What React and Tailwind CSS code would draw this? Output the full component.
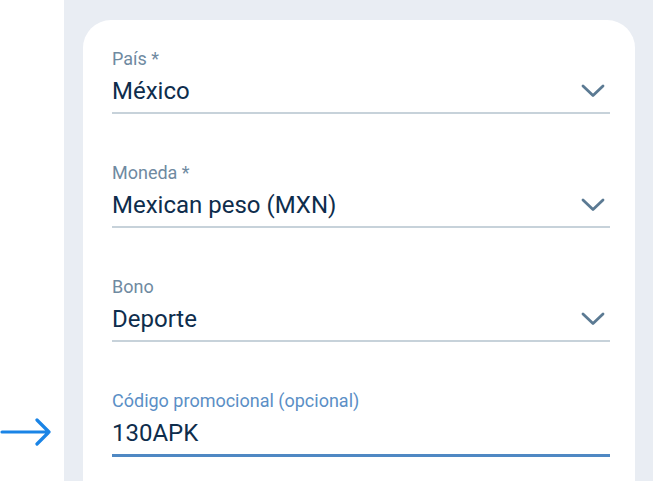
const fields = [
  { label: "País *", value: "México", select: true },
  { label: "Moneda *", value: "Mexican peso (MXN)", select: true },
  { label: "Bono", value: "Deporte", select: true },
  { label: "Código promocional (opcional)", value: "130APK", focused: true },
];

const Chevron = () => (
  <svg width="24" height="14" viewBox="0 0 24 14" fill="none" className="shrink-0 mr-[5px]">
    <path d="M2 2 L12 11.5 L22 2" stroke="#5b7a93" strokeWidth="2.8" strokeLinecap="round" strokeLinejoin="round" />
  </svg>
);

const Field = ({ label, value, select, focused }) => (
  <div className="flex flex-col">
    <label
      className={`text-[18px] leading-[20px] ${focused ? "text-[#5b8fc6]" : "text-[#6f8aa1]"}`}
    >
      {label}
    </label>
    <div className="flex items-center justify-between h-[36px] mt-[4px]">
      <span className="text-[24px] leading-[32px] text-[#0e2d4c]">{value}</span>
      {select && <Chevron />}
    </div>
    <div
      className={`mt-[3px] ${focused ? "h-[3px] bg-[#4f88c3]" : "h-[2px] bg-[#c7d2da]"}`}
    />
  </div>
);

export default function App() {
  return (
    <div className="w-[653px] h-[481px] bg-white flex overflow-hidden" style={{ fontFamily: "Roboto, 'Noto Sans', sans-serif" }}>
      {/* Left gutter with arrow */}
      <div className="w-[64px] shrink-0 relative">
        <svg
          className="absolute left-0 top-[418px]"
          width="54"
          height="28"
          viewBox="0 0 54 28"
          fill="none"
        >
          <path d="M2 14 H49 M37 2 L49 14 L37 26" stroke="#1a84e6" strokeWidth="3.2" strokeLinecap="round" strokeLinejoin="round" />
        </svg>
      </div>

      {/* Grey panel */}
      <div className="flex-1 bg-[#e9edf3] pt-[20px] pl-[19px] pr-[18px]">
        <div className="bg-white rounded-t-[28px] h-full pl-[29px] pr-[25px] pt-[29px] flex flex-col gap-[49px]">
          {fields.map((f) => (
            <Field key={f.label} {...f} />
          ))}
        </div>
      </div>
    </div>
  );
}
